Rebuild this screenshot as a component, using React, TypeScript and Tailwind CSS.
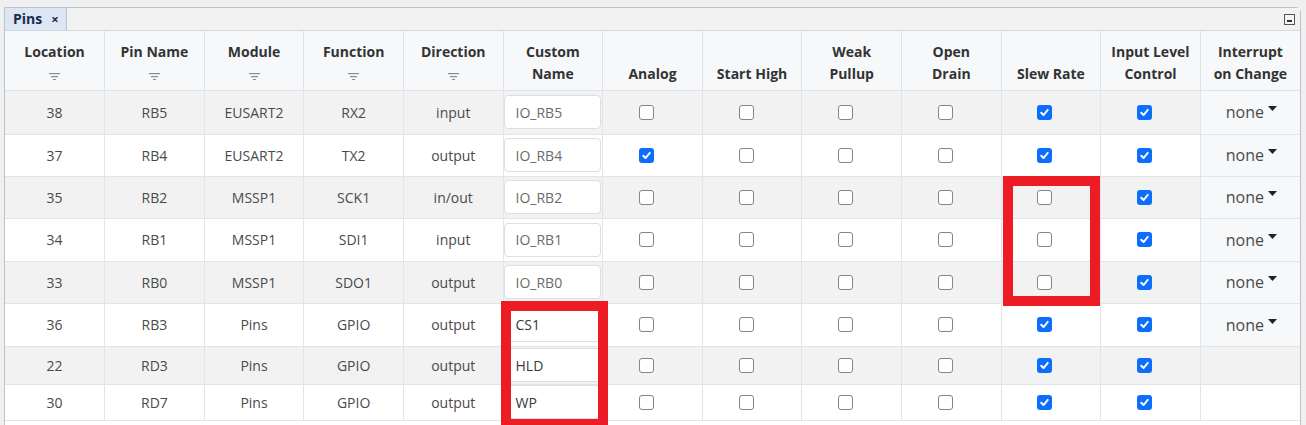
import React from 'react';

type Row = {
  loc: string;
  pin: string;
  module: string;
  fn: string;
  dir: string;
  name: string;
  custom: boolean;
  analog: boolean;
  slew: boolean;
  ioc: boolean;
  h: string;
};

const rows: Row[] = [
  { loc: '38', pin: 'RB5', module: 'EUSART2', fn: 'RX2', dir: 'input', name: 'IO_RB5', custom: false, analog: false, slew: true, ioc: true, h: 'h-[44px]' },
  { loc: '37', pin: 'RB4', module: 'EUSART2', fn: 'TX2', dir: 'output', name: 'IO_RB4', custom: false, analog: true, slew: true, ioc: true, h: 'h-[42px]' },
  { loc: '35', pin: 'RB2', module: 'MSSP1', fn: 'SCK1', dir: 'in/out', name: 'IO_RB2', custom: false, analog: false, slew: false, ioc: true, h: 'h-[42px]' },
  { loc: '34', pin: 'RB1', module: 'MSSP1', fn: 'SDI1', dir: 'input', name: 'IO_RB1', custom: false, analog: false, slew: false, ioc: true, h: 'h-[43px]' },
  { loc: '33', pin: 'RB0', module: 'MSSP1', fn: 'SDO1', dir: 'output', name: 'IO_RB0', custom: false, analog: false, slew: false, ioc: true, h: 'h-[42px]' },
  { loc: '36', pin: 'RB3', module: 'Pins', fn: 'GPIO', dir: 'output', name: 'CS1', custom: true, analog: false, slew: true, ioc: true, h: 'h-[43px]' },
  { loc: '22', pin: 'RD3', module: 'Pins', fn: 'GPIO', dir: 'output', name: 'HLD', custom: true, analog: false, slew: true, ioc: false, h: 'h-[38px]' },
  { loc: '30', pin: 'RD7', module: 'Pins', fn: 'GPIO', dir: 'output', name: 'WP', custom: true, analog: false, slew: true, ioc: false, h: 'h-[36px]' },
];

function FilterIcon() {
  return (
    <svg width="11" height="7" viewBox="0 0 11 7" className="mx-auto mt-[10px] block">
      <rect x="0" y="0" width="11" height="1.2" fill="#8c8c8c" />
      <rect x="2" y="3" width="7" height="1.2" fill="#8c8c8c" />
      <rect x="4" y="6" width="3" height="1" fill="#8c8c8c" />
    </svg>
  );
}

function Check({ on }: { on: boolean }) {
  if (on) {
    return (
      <div className="mx-auto -translate-x-[6px] w-[15px] h-[15px] rounded-[3px] bg-[#0d6efd] flex items-center justify-center">
        <svg width="11" height="11" viewBox="0 0 10 10">
          <path d="M2 5.2 L4.1 7.3 L8 2.6" fill="none" stroke="#fff" strokeWidth="1.7" strokeLinecap="round" strokeLinejoin="round" />
        </svg>
      </div>
    );
  }
  return <div className="mx-auto -translate-x-[6px] w-[15px] h-[15px] rounded-[3px] border border-[#858585] bg-white" />;
}

function Head({ top, bottom, filter }: { top?: string; bottom?: string; filter?: boolean }) {
  return (
    <th className="border-r border-b border-[#dfe3e8] bg-[#f6f8fa] font-bold text-[14px] text-[#333] align-top p-0 last:border-r-0">
      <div className="flex flex-col items-center pt-[10px] leading-[22px]">
        <span className="h-[22px]">{top ?? '\u00a0'}</span>
        {filter ? <FilterIcon /> : <span className="h-[22px]">{bottom ?? '\u00a0'}</span>}
      </div>
    </th>
  );
}

export default function App() {
  const td = 'border-r border-b border-[#e1e4e8] p-0 text-center text-[14px] text-[#4a4a4a]';
  return (
    <div
      className="w-[1306px] h-[425px] bg-[#f0f0f0] overflow-hidden pt-[7px] pl-[4px] pr-[5px]"
      style={{ fontFamily: '"Open Sans", "Noto Sans", sans-serif' }}
    >
      <div className="relative h-[430px] border border-[#b7c4d3] rounded-tr-[5px] bg-white">
        {/* tab bar */}
        <div className="h-[23px] bg-[#f2f2f2] flex items-stretch justify-between border-b border-[#d3d9e0]">
          <div className="w-[62px] bg-[#dde6f3] border-r border-[#b4c2d3] flex items-center pl-[8px] gap-[9px] text-[#1b2b4b] font-bold">
            <span className="text-[14px] leading-none">Pins</span>
            <span className="text-[13px] leading-none">×</span>
          </div>
          <div className="flex items-center pr-[5px]">
            <div className="w-[11px] h-[11px] border border-[#555] bg-[#f4f4f4] flex items-end justify-center pb-[2px]">
              <div className="w-[5px] h-[2px] bg-[#333]" />
            </div>
          </div>
        </div>

        {/* table */}
        <table className="w-[1295px] table-fixed border-collapse">
          <thead>
            <tr className="h-[59px]">
              <Head top="Location" filter />
              <Head top="Pin Name" filter />
              <Head top="Module" filter />
              <Head top="Function" filter />
              <Head top="Direction" filter />
              <Head top="Custom" bottom="Name" />
              <Head bottom="Analog" />
              <Head bottom="Start High" />
              <Head top="Weak" bottom="Pullup" />
              <Head top="Open" bottom="Drain" />
              <Head bottom="Slew Rate" />
              <Head top="Input Level" bottom="Control" />
              <Head top="Interrupt" bottom="on Change" />
            </tr>
          </thead>
          <tbody>
            {rows.map((r, i) => (
              <tr key={r.loc} className={`${r.h} ${i % 2 === 0 ? 'bg-[#f2f2f2]' : 'bg-white'}`}>
                <td className={td}>{r.loc}</td>
                <td className={td}>{r.pin}</td>
                <td className={td}>{r.module}</td>
                <td className={td}>{r.fn}</td>
                <td className={td}>{r.dir}</td>
                <td className={`${td} text-left`}>
                  <div
                    className={`mr-[1px] h-[34px] rounded-[4px] border border-[#dadfe5] bg-white pl-[11px] flex items-center ${
                      r.custom ? 'text-[#3a3a3a]' : 'text-[#6b6b6b]'
                    }`}
                  >
                    {r.name}
                  </div>
                </td>
                <td className={td}><Check on={r.analog} /></td>
                <td className={td}><Check on={false} /></td>
                <td className={td}><Check on={false} /></td>
                <td className={td}><Check on={false} /></td>
                <td className={td}><Check on={r.slew} /></td>
                <td className={td}><Check on={true} /></td>
                <td className={`${td} border-r-0 ${r.ioc ? 'bg-[#f6f8fa]' : ''} text-[#3a3a3a] text-[16px]`}>
                  {r.ioc && (
                    <span className="inline-flex items-start gap-[4px] pl-[2px]">
                      <span>none</span>
                      <svg width="9" height="5" viewBox="0 0 9 5" className="mt-[6px]">
                        <path d="M0 0 H9 L4.5 5 Z" fill="#222" />
                      </svg>
                    </span>
                  )}
                </td>
              </tr>
            ))}
          </tbody>
        </table>

        {/* highlight boxes */}
        <div className="absolute left-[998px] top-[168px] w-[97px] h-[130px] border-[10px] border-[#ed1c24]" />
        <div className="absolute left-[496px] top-[293px] w-[107px] h-[128px] border-[10px] border-[#ed1c24]" />
      </div>
    </div>
  );
}
